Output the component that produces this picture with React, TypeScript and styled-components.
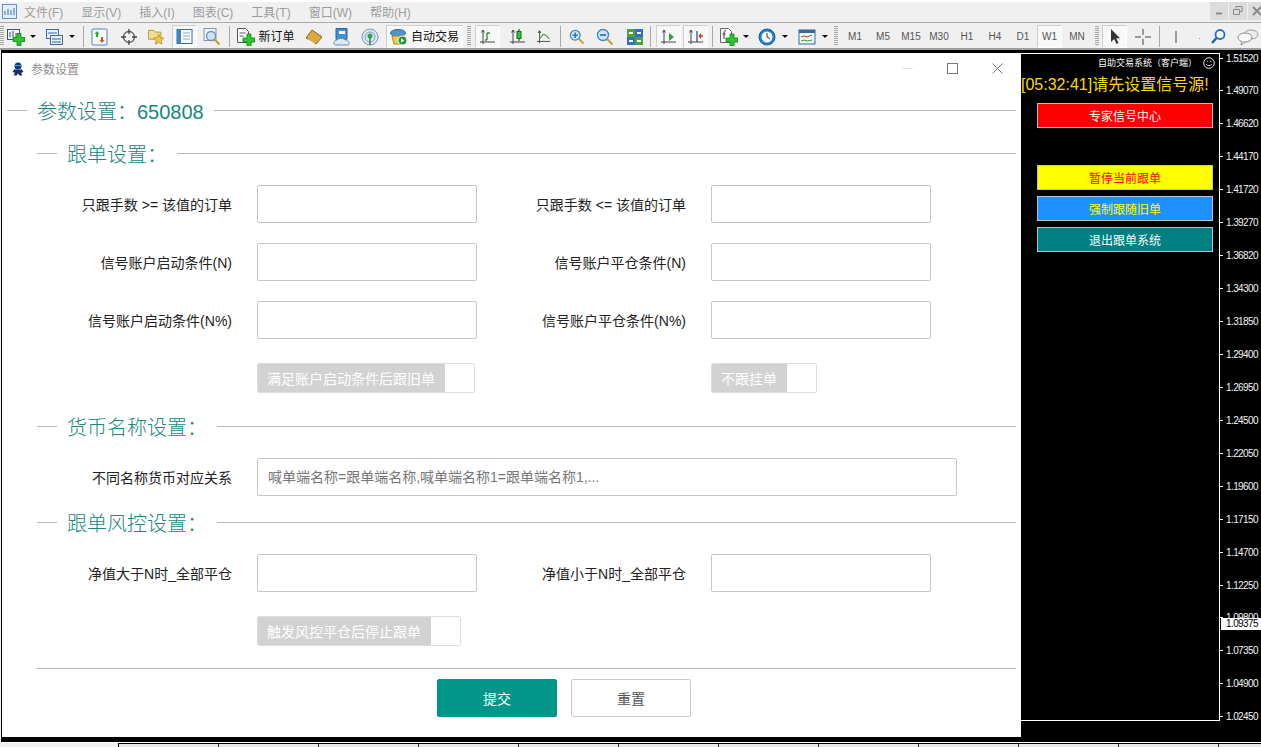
import React from 'react';
import styled, { createGlobalStyle } from 'styled-components';

const GlobalStyle = createGlobalStyle`
    html, body {
        margin: 0;
        padding: 0;
        background: #000;
    }
    body {
        font-family: 'Liberation Sans', 'Noto Sans CJK SC', sans-serif;
    }
    * {
        box-sizing: border-box;
    }
`;

const COLORS = {
    teal: '#009688',
    sectionTeal: '#16887d',
    line: '#b9b9b2',
    inputBorder: '#c6c6c6',
    bar: '#f0f0f0',
};

/* ---------- window chrome ---------- */

const Terminal = styled.div`
    width: 1261px;
    height: 747px;
    display: flex;
    flex-direction: column;
    overflow: hidden;
`;

const MenuBar = styled.div`
    height: 23px;
    flex: none;
    display: flex;
    align-items: center;
    padding-left: 2px;
    background: linear-gradient(#fff 2px, ${COLORS.bar} 2px);
    border-bottom: 1px solid #a9a9a9;
`;

const MenuList = styled.div`
    display: flex;
    gap: 18px;
    margin-left: 7px;
    flex: 1;
`;

const MenuItem = styled.span`
    font-size: 12px;
    color: #9c9c9c;
`;

const WinButtons = styled.div`
    display: flex;
    gap: 1px;
    margin-right: -5px;
`;

const WinButton = styled.div`
    width: 18px;
    height: 18px;
    background: #dcdcdc;
    display: flex;
    align-items: center;
    justify-content: center;
`;

const ToolBar = styled.div`
    height: 27px;
    flex: none;
    display: flex;
    align-items: flex-start;
    padding-top: 2px;
    background: ${COLORS.bar};
    border-bottom: 2px solid #9f9f9f;
    overflow: hidden;
`;

const ToolButton = styled.div<{ $w: number; $pressed?: boolean; $gap?: number }>`
    width: ${(p) => p.$w}px;
    height: 23px;
    margin-right: ${(p) => p.$gap ?? 0}px;
    flex: none;
    display: flex;
    align-items: center;
    justify-content: center;
    gap: 3px;
    font-size: 12px;
    color: #555;
    border: 1px solid ${(p) => (p.$pressed ? '#cfcfcf' : 'transparent')};
    border-bottom-color: ${(p) => (p.$pressed ? '#fff' : 'transparent')};
    border-right-color: ${(p) => (p.$pressed ? '#fff' : 'transparent')};
    background: ${(p) => (p.$pressed ? '#f8f8f8' : 'transparent')};
`;

const ToolLabel = styled.span`
    font-size: 12px;
    color: #111;
    white-space: nowrap;
    margin-top: -3px;
`;

const Timeframe = styled(ToolButton)`
    font-size: 10px;
    color: #555;
`;

const Divider = styled.div<{ $mx: number }>`
    width: 1px;
    height: 21px;
    flex: none;
    margin: 1px ${(p) => p.$mx}px 0;
    background: #a8a8a8;
`;

const Grip = styled.div<{ $mx: number }>`
    width: 4px;
    height: 20px;
    flex: none;
    margin: 1px ${(p) => p.$mx}px 0;
    background: repeating-linear-gradient(#a6a6a6 0 1px, transparent 1px 2px);
`;

const Caret = styled.span`
    width: 0;
    height: 0;
    flex: none;
    border-left: 3px solid transparent;
    border-right: 3px solid transparent;
    border-top: 3px solid #111;
`;

/* ---------- workspace ---------- */

const Workspace = styled.div`
    flex: 1;
    display: flex;
    align-items: flex-start;
    background: #000;
    padding-left: 1px;
    border-left: 1px solid ${COLORS.bar};
`;

const Dialog = styled.div`
    width: 1019px;
    height: 684px;
    flex: none;
    margin-top: 3px;
    background: #fff;
    padding-right: 5px;
`;

const TitleBar = styled.div`
    height: 31px;
    display: flex;
    align-items: center;
    margin-right: -4px;
    padding-left: 9px;
    font-size: 12px;
    color: #8d8d8d;
    gap: 6px;
`;

const TitleText = styled.span`
    flex: 1;
`;

const TitleControl = styled.div`
    width: 45px;
    margin-left: -6px;
    display: flex;
    justify-content: center;
`;

const FormBody = styled.div`
    padding-top: 14px;
`;

const Legend = styled.div<{ $top: number; $indent: number }>`
    display: flex;
    align-items: center;
    height: 24px;
    margin-top: ${(p) => p.$top}px;
    padding-left: ${(p) => p.$indent}px;
    font-size: 20px;
    font-weight: 300;
    color: ${COLORS.sectionTeal};
    white-space: nowrap;
    &::before {
        content: '';
        width: 20px;
        height: 1px;
        margin-right: 10px;
        background: ${COLORS.line};
    }
    &::after {
        content: '';
        flex: 1;
        height: 1px;
        margin-left: 10px;
        background: ${COLORS.line};
    }
`;

const Row = styled.div<{ $top: number }>`
    display: grid;
    grid-template-columns: 195px 245px 209px 245px;
    align-items: center;
    margin-top: ${(p) => p.$top}px;
    padding-left: 35px;
`;

const FieldLabel = styled.label`
    font-size: 14px;
    color: #222;
    text-align: right;
    white-space: nowrap;
`;

const TextInput = styled.input<{ $wide?: boolean }>`
    display: block;
    width: ${(p) => (p.$wide ? '700px' : '220px')};
    height: 38px;
    margin-left: 25px;
    padding: 0 10px;
    border: 1px solid ${COLORS.inputBorder};
    border-radius: 2px;
    background: #fff;
    font: inherit;
    font-size: 14px;
    outline: none;
    &::placeholder {
        color: #777;
        opacity: 1;
    }
`;

const Toggle = styled.div<{ $col: number }>`
    grid-column: ${(p) => p.$col};
    width: fit-content;
    height: 30px;
    display: flex;
    margin-left: 25px;
    border: 1px solid #dedede;
    border-radius: 2px;
    overflow: hidden;
    background: #fff;
`;

const ToggleText = styled.span`
    padding: 0 10px 0 9px;
    display: flex;
    align-items: center;
    background: #d2d2d2;
    color: #fff;
    font-size: 14px;
    white-space: nowrap;
`;

const ToggleKnob = styled.span`
    width: 29px;
    background: #fff;
`;

const FooterRule = styled.div`
    height: 1px;
    margin: 22px 0 0 35px;
    background: ${COLORS.line};
`;

const Actions = styled.div`
    display: flex;
    gap: 14px;
    margin-top: 10px;
    padding-left: 435px;
`;

const ActionButton = styled.button<{ $primary?: boolean }>`
    width: 120px;
    height: 38px;
    padding: 0;
    border: 1px solid ${(p) => (p.$primary ? COLORS.teal : '#c9c9c9')};
    border-radius: 2px;
    background: ${(p) => (p.$primary ? COLORS.teal : '#fff')};
    color: ${(p) => (p.$primary ? '#fff' : '#555')};
    font: inherit;
    font-size: 14px;
`;

/* ---------- chart side ---------- */

const ChartPane = styled.div`
    width: 199px;
    height: 668px;
    flex: none;
    margin-top: 3px;
    border-top: 1px solid #fff;
    border-right: 1px solid #fff;
    border-bottom: 1px solid #fff;
`;

const ChartCaption = styled.div`
    display: flex;
    justify-content: flex-end;
    align-items: center;
    gap: 6px;
    height: 17px;
    padding-right: 4px;
    font-size: 9px;
    color: #fff;
    white-space: nowrap;
`;

const SignalNotice = styled.div`
    margin-top: 2px;
    height: 20px;
    display: flex;
    align-items: center;
    font-size: 16px;
    color: #ffd700;
    white-space: nowrap;
`;

const ChartButtons = styled.div`
    display: flex;
    flex-direction: column;
    gap: 6px;
    margin: 10px 0 0 16px;
`;

const ChartButton = styled.div<{ $bg: string; $fg: string; $offset?: number }>`
    width: 176px;
    height: 25px;
    margin-top: ${(p) => p.$offset ?? 0}px;
    padding-bottom: 1px;
    display: flex;
    align-items: center;
    justify-content: center;
    background: ${(p) => p.$bg};
    color: ${(p) => p.$fg};
    border: 1px solid #b6c2cc;
    font-size: 12px;
`;

const PriceAxis = styled.div`
    position: relative;
    width: 41px;
    height: 675px;
    flex: none;
    display: flex;
    flex-direction: column;
    justify-content: space-between;
`;

const PriceLabel = styled.div`
    height: 16px;
    display: flex;
    align-items: center;
    gap: 3px;
    font-size: 10px;
    letter-spacing: -0.6px;
    color: #f4f4f4;
    &::before {
        content: '';
        width: 3px;
        height: 1px;
        background: #fff;
    }
`;

const PriceTag = styled.div`
    position: absolute;
    left: 1px;
    top: 568px;
    width: 40px;
    height: 12px;
    padding-left: 5px;
    background: #fff;
    color: #000;
    font-size: 10px;
    letter-spacing: -0.6px;
    line-height: 12px;
`;

const BottomStrip = styled.div`
    height: 5px;
    flex: none;
    display: flex;
    background: #f0f0f0;
    border-top: 1px solid #fff;
`;

const StripOffset = styled.div`
    width: 118px;
    flex: none;
`;

const StripTicks = styled.div`
    flex: 1;
    border-top: 1px solid #000;
    border-left: 1px solid #000;
    background: repeating-linear-gradient(90deg, #e8e8e8 0 99px, #333 99px 100px);
`;

/* ---------- drawn icons ---------- */

const Ico = ({ w = 18, h = 18, children }: { w?: number; h?: number; children: React.ReactNode }): JSX.Element => (
    <svg width={w} height={h} viewBox={`0 0 ${w} ${h}`} fill="none">
        {children}
    </svg>
);

const GreenPlus = ({ x, y }: { x: number; y: number }): JSX.Element => (
    <path
        d={`M${x + 4} ${y}h4v4h4v4h-4v4h-4v-4h-4v-4h4z`}
        fill="#2ac62a"
        stroke="#0c7d16"
        strokeWidth="0.8"
    />
);

const NewChartIcon = (): JSX.Element => (
    <Ico>
        <rect x="0.5" y="1.5" width="12" height="10" fill="#eef3fa" stroke="#44556a" />
        <path d="M3 4v5M6 3v6M9 5v4" stroke="#44556a" />
        <GreenPlus x={6} y={5.500} />
    </Ico>
);

const ProfilesIcon = (): JSX.Element => (
    <Ico>
        <rect x="1.5" y="1.5" width="12" height="9" fill="#e8f0fa" stroke="#3d6b9e" />
        <rect x="5.5" y="7.5" width="12" height="9" fill="#e8f0fa" stroke="#3d6b9e" />
        <path d="M3 5h9M7 11h9M7 14h9" stroke="#3d6b9e" />
    </Ico>
);

const MarketIcon = (): JSX.Element => (
    <Ico>
        <rect x="1" y="1" width="15" height="16" rx="1" fill="#f6f9fd" stroke="#4f86bd" />
        <path d="M5 9V6H3.5L6 3l2.500 3H7v3z" fill="#2faa2f" />
        <path d="M10 9v3H8.500l2.500 3 2.500-3H12V9z" fill="#d8551f" />
    </Ico>
);

const CrosshairIcon = (): JSX.Element => (
    <Ico>
        <circle cx="9" cy="9" r="5.500" stroke="#555" strokeWidth="1.300" />
        <path d="M9 1v5M9 12v5M1 9h5M12 9h5" stroke="#444" strokeWidth="1.300" />
    </Ico>
);

const FolderStarIcon = (): JSX.Element => (
    <Ico>
        <path d="M0.500 1.500h6l2 2h6v8h-14z" fill="#f3dc92" stroke="#a98f3f" />
        <path d="M12 6l1.800 3.700 4 .6-2.900 2.800.7 4-3.600-1.900-3.600 1.900.7-4-2.900-2.800 4-.6z" fill="#f0c93a" stroke="#a8862a" strokeWidth="0.800" />
    </Ico>
);

const NavigatorIcon = (): JSX.Element => (
    <Ico>
        <rect x="1" y="1.500" width="15" height="14" fill="#fff" stroke="#2f6aa3" />
        <rect x="1" y="1.500" width="4" height="14" fill="#3c86c9" />
        <path d="M7 5h7M7 8h7M7 11h7" stroke="#7ca7cf" />
    </Ico>
);

const TesterIcon = (): JSX.Element => (
    <Ico w={20} h={20}>
        <rect x="2" y="1.500" width="12" height="12" fill="#eef2f7" stroke="#8695a8" />
        <circle cx="9" cy="9" r="4.500" fill="#cfe3f3" stroke="#6b8fb0" strokeWidth="1.300" />
        <path d="M12.500 12.500l5 5" stroke="#c89a2e" strokeWidth="2" />
    </Ico>
);

const NewOrderIcon = (): JSX.Element => (
    <Ico>
        <path d="M0.500 0.500h8l3 3v11h-11z" fill="#fff" stroke="#555" />
        <path d="M2.500 5h6M2.500 8h4" stroke="#555" />
        <GreenPlus x={6} y={6} />
    </Ico>
);

const BookIcon = (): JSX.Element => (
    <Ico>
        <path d="M1 10l6-8 10 7-6 7z" fill="#dca845" stroke="#8c6716" />
        <path d="M3 11.500l7 4" stroke="#fff0c4" />
    </Ico>
);

const CloudBookIcon = (): JSX.Element => (
    <Ico>
        <path d="M3 0.500h11v11H3z" fill="#3f8fd9" stroke="#24669f" />
        <path d="M6 3h6v3H6z" fill="#fff" />
        <path d="M2 17c-2-1-1-5 2-5 1-2 7-2 8 0 3-1 6 4 3 5z" fill="#dfe9f4" stroke="#6f8fb0" />
    </Ico>
);

const SignalIcon = (): JSX.Element => (
    <Ico>
        <circle cx="9" cy="9" r="8" fill="#dce7ef" stroke="#7f9ab0" />
        <circle cx="9" cy="9" r="5" stroke="#7aa4c4" />
        <circle cx="9" cy="8" r="2.500" fill="#2fa84a" />
        <path d="M9 9v8" stroke="#2d8a3f" strokeWidth="1.500" />
    </Ico>
);

const AutoTradeIcon = (): JSX.Element => (
    <Ico>
        <ellipse cx="8" cy="5" rx="7.500" ry="3.500" fill="#4c93cf" stroke="#2c6c9f" />
        <path d="M2 8h12l-2 8H4z" fill="#efc84e" stroke="#a88a26" />
        <circle cx="12.500" cy="12.500" r="4.500" fill="#169a3c" stroke="#fff" />
        <path d="M11 10.300v4.400l3.400-2.200z" fill="#fff" />
    </Ico>
);

const AxisBase = (): JSX.Element => <path d="M4 2v14M1 14h15M4 2L2.500 4.500M4 2l1.500 2.500" stroke="#444" />;

const BarsIcon = (): JSX.Element => (
    <Ico>
        <AxisBase />
        <path d="M8 12V5M8 5h3M8 12H6" stroke="#1f8b2e" strokeWidth="1.300" />
    </Ico>
);

const CandleIcon = (): JSX.Element => (
    <Ico>
        <AxisBase />
        <path d="M10 1v3M10 10v3" stroke="#222" />
        <rect x="8" y="3.500" width="4" height="7" fill="#33c23c" stroke="#14691b" />
    </Ico>
);

const LineIcon = (): JSX.Element => (
    <Ico>
        <AxisBase />
        <path d="M4 11l4-5 3 1 4 4" stroke="#2e9a3b" strokeWidth="1.200" />
    </Ico>
);

const ZoomIcon = ({ minus }: { minus?: boolean }): JSX.Element => (
    <Ico>
        <circle cx="7" cy="7" r="5.500" fill="#cfe6f7" stroke="#3c8ac4" strokeWidth="1.400" />
        <path d={minus ? 'M4 7h6' : 'M4 7h6M7 4v6'} stroke="#2b7ab6" strokeWidth="1.800" />
        <path d="M11 11l5.500 5.500" stroke="#c9a13a" strokeWidth="2.200" />
    </Ico>
);

const TileIcon = (): JSX.Element => (
    <Ico>
        <rect x="1" y="1" width="8" height="8" fill="#4ca33c" />
        <rect x="9" y="1" width="8" height="8" fill="#2e6fd0" />
        <rect x="1" y="9" width="8" height="8" fill="#2e6fd0" />
        <rect x="9" y="9" width="8" height="8" fill="#4ca33c" />
        <path d="M3 5h4M11 5h4M3 13h4M11 13h4" stroke="#fff" strokeWidth="2" />
    </Ico>
);

const ShiftIcon = (): JSX.Element => (
    <Ico>
        <AxisBase />
        <path d="M9 5l5 4-5 4z" fill="#2ba636" />
    </Ico>
);

const AutoScrollIcon = (): JSX.Element => (
    <Ico>
        <AxisBase />
        <path d="M10 3v11" stroke="#28568c" strokeWidth="1.300" />
        <path d="M16 8h-4M12 8l2-2M12 8l2 2" stroke="#c9361a" strokeWidth="1.300" />
    </Ico>
);

const IndicatorIcon = (): JSX.Element => (
    <Ico>
        <path d="M0.500 0.500h8l3 3v11h-11z" fill="#fff" stroke="#666" />
        <path d="M4 11V4c0-1 1-1.500 2-1M2.500 6h3" stroke="#333" />
        <GreenPlus x={6} y={6} />
    </Ico>
);

const ClockIcon = (): JSX.Element => (
    <Ico>
        <circle cx="9" cy="9" r="8" fill="#1f7fd1" stroke="#135a9a" />
        <circle cx="9" cy="9" r="5.500" fill="#f5f8fb" />
        <path d="M9 5v4l3 2" stroke="#333" />
    </Ico>
);

const TemplateIcon = (): JSX.Element => (
    <Ico>
        <rect x="1" y="2" width="16" height="14" fill="#f5f8fb" stroke="#2f6aa3" />
        <rect x="1" y="2" width="16" height="3" fill="#2f6aa3" />
        <path d="M3 9l3-1 3 1 5-2" stroke="#c93a1e" />
        <path d="M3 13l3-1 3 1 5-1" stroke="#2e9a3b" />
    </Ico>
);

const CursorIcon = (): JSX.Element => (
    <Ico>
        <path d="M5 1v13l3.200-3 2.300 5 2-1-2.300-4.800H14z" fill="#333" />
    </Ico>
);

const CrossIcon = (): JSX.Element => (
    <Ico>
        <path d="M9 1v6M9 11v6M1 9h6M11 9h6" stroke="#444" />
    </Ico>
);

const VLineIcon = (): JSX.Element => (
    <Ico>
        <path d="M9 3v12" stroke="#444" />
    </Ico>
);

const DotIcon = (): JSX.Element => (
    <Ico>
        <path d="M9 11h1v1H9z" fill="#444" />
    </Ico>
);

const SearchIcon = (): JSX.Element => (
    <Ico>
        <circle cx="11" cy="6.500" r="4.500" fill="#fff" stroke="#1f6fd0" strokeWidth="1.800" />
        <path d="M7.500 10L3 15" stroke="#1f5fb0" strokeWidth="2.400" />
    </Ico>
);

const ChatIcon = (): JSX.Element => (
    <Ico w={22}>
        <ellipse cx="14" cy="6.500" rx="7" ry="4.500" fill="#eee" stroke="#999" />
        <ellipse cx="8" cy="9.500" rx="7" ry="4.500" fill="#fafafa" stroke="#888" />
        <path d="M5 13l-1 4 4-3" fill="#fafafa" stroke="#888" />
    </Ico>
);

const AppIcon = (): JSX.Element => (
    <Ico w={15} h={15}>
        <rect x="0.500" y="0.500" width="14" height="14" fill="#e6f0fa" stroke="#5a93c9" />
        <path d="M3 7v4M6 5v6M9 6v5M12 4v7" stroke="#356fa8" />
    </Ico>
);

const RobotIcon = (): JSX.Element => (
    <Ico w={14} h={14}>
        <circle cx="7" cy="4" r="3.500" fill="#123a7a" />
        <path d="M3 7.500h8l1.500 2.500-2 .5v1.500l1 1.500H8.500L7 11.500 5.500 13.500H2.500l1-1.500v-1.500l-2-.5z" fill="#15306a" />
        <path d="M4 3.500h6" stroke="#5f97d8" />
    </Ico>
);

const Smiley = (): JSX.Element => (
    <Ico w={12} h={12}>
        <circle cx="6" cy="6" r="5.300" stroke="#ddd" />
        <path d="M3.800 4.300h1M7.200 4.300h1" stroke="#ddd" />
        <path d="M3.200 7.300c1.200 1.700 4.400 1.700 5.600 0" stroke="#ddd" />
    </Ico>
);

/* ---------- data ---------- */

const MENU = ['文件(F)', '显示(V)', '插入(I)', '图表(C)', '工具(T)', '窗口(W)', '帮助(H)'];

const TIMEFRAMES = ['M1', 'M5', 'M15', 'M30', 'H1', 'H4', 'D1'];

const PRICES = [
    '1.51520', '1.49070', '1.46620', '1.44170', '1.41720', '1.39270', '1.36820',
    '1.34300', '1.31850', '1.29400', '1.26950', '1.24500', '1.22050', '1.19600',
    '1.17150', '1.14700', '1.12250', '1.09800', '1.07350', '1.04900', '1.02450',
];

const Toolbar = (): JSX.Element => (
    <ToolBar>
        <Grip $mx={0} />
        <ToolButton $w={24}><NewChartIcon /></ToolButton>
        <ToolButton $w={10} $gap={4}><Caret /></ToolButton>
        <ToolButton $w={24}><ProfilesIcon /></ToolButton>
        <ToolButton $w={12}><Caret /></ToolButton>
        <Divider $mx={5} />
        <ToolButton $w={22}><MarketIcon /></ToolButton>
        <ToolButton $w={36}><CrosshairIcon /></ToolButton>
        <ToolButton $w={18} $gap={7}><FolderStarIcon /></ToolButton>
        <ToolButton $w={25} $pressed><NavigatorIcon /></ToolButton>
        <ToolButton $w={30}><TesterIcon /></ToolButton>
        <Divider $mx={2} />
        <ToolButton $w={68}><NewOrderIcon /><ToolLabel>新订单</ToolLabel></ToolButton>
        <ToolButton $w={28}><BookIcon /></ToolButton>
        <ToolButton $w={28}><CloudBookIcon /></ToolButton>
        <ToolButton $w={28} $gap={2}><SignalIcon /></ToolButton>
        <ToolButton $w={77} $pressed><AutoTradeIcon /><ToolLabel>自动交易</ToolLabel></ToolButton>
        <Grip $mx={4} />
        <ToolButton $w={25} $pressed><BarsIcon /></ToolButton>
        <ToolButton $w={35}><CandleIcon /></ToolButton>
        <ToolButton $w={18}><LineIcon /></ToolButton>
        <Divider $mx={7} />
        <ToolButton $w={18}><ZoomIcon /></ToolButton>
        <ToolButton $w={38}><ZoomIcon minus /></ToolButton>
        <ToolButton $w={21}><TileIcon /></ToolButton>
        <Divider $mx={5} />
        <ToolButton $w={25} $gap={2} $pressed><ShiftIcon /></ToolButton>
        <ToolButton $w={25} $pressed><AutoScrollIcon /></ToolButton>
        <Divider $mx={4} />
        <ToolButton $w={24}><IndicatorIcon /></ToolButton>
        <ToolButton $w={10} $gap={4}><Caret /></ToolButton>
        <ToolButton $w={24}><ClockIcon /></ToolButton>
        <ToolButton $w={12} $gap={4}><Caret /></ToolButton>
        <ToolButton $w={24}><TemplateIcon /></ToolButton>
        <ToolButton $w={12}><Caret /></ToolButton>
        <Grip $mx={3} />
        {TIMEFRAMES.map((tf) => (
            <Timeframe key={tf} $w={28}>{tf}</Timeframe>
        ))}
        <Timeframe $w={25} $pressed>W1</Timeframe>
        <Timeframe $w={30}>MN</Timeframe>
        <Grip $mx={3} />
        <ToolButton $w={25} $pressed><CursorIcon /></ToolButton>
        <ToolButton $w={32}><CrossIcon /></ToolButton>
        <Divider $mx={0} />
        <ToolButton $w={32}><VLineIcon /></ToolButton>
        <ToolButton $w={14}><DotIcon /></ToolButton>
        <ToolButton $w={24}><SearchIcon /></ToolButton>
        <ToolButton $w={36}><ChatIcon /></ToolButton>
    </ToolBar>
);

const SettingsDialog = (): JSX.Element => (
    <Dialog>
        <TitleBar>
            <RobotIcon />
            <TitleText>参数设置</TitleText>
            <TitleControl>
                <svg width="11" height="11"><path d="M0 5.500h11" stroke="#e4e4e4" /></svg>
            </TitleControl>
            <TitleControl>
                <svg width="11" height="11"><rect x="0.500" y="0.500" width="10" height="10" stroke="#777" fill="none" /></svg>
            </TitleControl>
            <TitleControl>
                <svg width="11" height="11"><path d="M0.500 0.500l10 10M10.500 0.500l-10 10" stroke="#777" fill="none" /></svg>
            </TitleControl>
        </TitleBar>
        <FormBody>
            <Legend $top={0} $indent={5}>参数设置：650808</Legend>
            <Legend $top={19} $indent={35}>跟单设置：</Legend>
            <Row $top={20}>
                <FieldLabel>只跟手数 &gt;= 该值的订单</FieldLabel>
                <TextInput />
                <FieldLabel>只跟手数 &lt;= 该值的订单</FieldLabel>
                <TextInput />
            </Row>
            <Row $top={20}>
                <FieldLabel>信号账户启动条件(N)</FieldLabel>
                <TextInput />
                <FieldLabel>信号账户平仓条件(N)</FieldLabel>
                <TextInput />
            </Row>
            <Row $top={20}>
                <FieldLabel>信号账户启动条件(N%)</FieldLabel>
                <TextInput />
                <FieldLabel>信号账户平仓条件(N%)</FieldLabel>
                <TextInput />
            </Row>
            <Row $top={24}>
                <Toggle $col={2}>
                    <ToggleText>满足账户启动条件后跟旧单</ToggleText>
                    <ToggleKnob />
                </Toggle>
                <Toggle $col={4}>
                    <ToggleText>不跟挂单</ToggleText>
                    <ToggleKnob />
                </Toggle>
            </Row>
            <Legend $top={21} $indent={35}>货币名称设置：</Legend>
            <Row $top={20}>
                <FieldLabel>不同名称货币对应关系</FieldLabel>
                <TextInput $wide placeholder="喊单端名称=跟单端名称,喊单端名称1=跟单端名称1,..." />
            </Row>
            <Legend $top={14} $indent={35}>跟单风控设置：</Legend>
            <Row $top={20}>
                <FieldLabel>净值大于N时_全部平仓</FieldLabel>
                <TextInput />
                <FieldLabel>净值小于N时_全部平仓</FieldLabel>
                <TextInput />
            </Row>
            <Row $top={24}>
                <Toggle $col={2}>
                    <ToggleText>触发风控平仓后停止跟单</ToggleText>
                    <ToggleKnob />
                </Toggle>
            </Row>
            <FooterRule />
            <Actions>
                <ActionButton $primary>提交</ActionButton>
                <ActionButton>重置</ActionButton>
            </Actions>
        </FormBody>
    </Dialog>
);

const App = (): JSX.Element => (
    <Terminal>
        <GlobalStyle />
        <MenuBar>
            <AppIcon />
            <MenuList>
                {MENU.map((item) => (
                    <MenuItem key={item}>{item}</MenuItem>
                ))}
            </MenuList>
            <WinButtons>
                <WinButton><svg width="8" height="8"><path d="M1 6.500h6" stroke="#8a8a8a" strokeWidth="2" /></svg></WinButton>
                <WinButton><svg width="10" height="10"><path d="M3 2.500V.5h6v5H7M.5 3.500h6v5h-6z" stroke="#8a8a8a" fill="none" /></svg></WinButton>
                <WinButton><svg width="10" height="10"><path d="M1 1l8 8M9 1L1 9" stroke="#8a8a8a" strokeWidth="2" /></svg></WinButton>
            </WinButtons>
        </MenuBar>
        <Toolbar />
        <Workspace>
            <SettingsDialog />
            <ChartPane>
                <ChartCaption>自助交易系统（客户端）<Smiley /></ChartCaption>
                <SignalNotice>[05:32:41]请先设置信号源!</SignalNotice>
                <ChartButtons>
                    <ChartButton $bg="#ff0000" $fg="#fff">专家信号中心</ChartButton>
                    <ChartButton $bg="#ffff00" $fg="#ff0000" $offset={31}>暂停当前跟单</ChartButton>
                    <ChartButton $bg="#1e90ff" $fg="#ffff00">强制跟随旧单</ChartButton>
                    <ChartButton $bg="#008080" $fg="#fff">退出跟单系统</ChartButton>
                </ChartButtons>
            </ChartPane>
            <PriceAxis>
                {PRICES.map((price) => (
                    <PriceLabel key={price}>{price}</PriceLabel>
                ))}
                <PriceTag>1.09375</PriceTag>
            </PriceAxis>
        </Workspace>
        <BottomStrip>
            <StripOffset />
            <StripTicks />
        </BottomStrip>
    </Terminal>
);

export default App;
